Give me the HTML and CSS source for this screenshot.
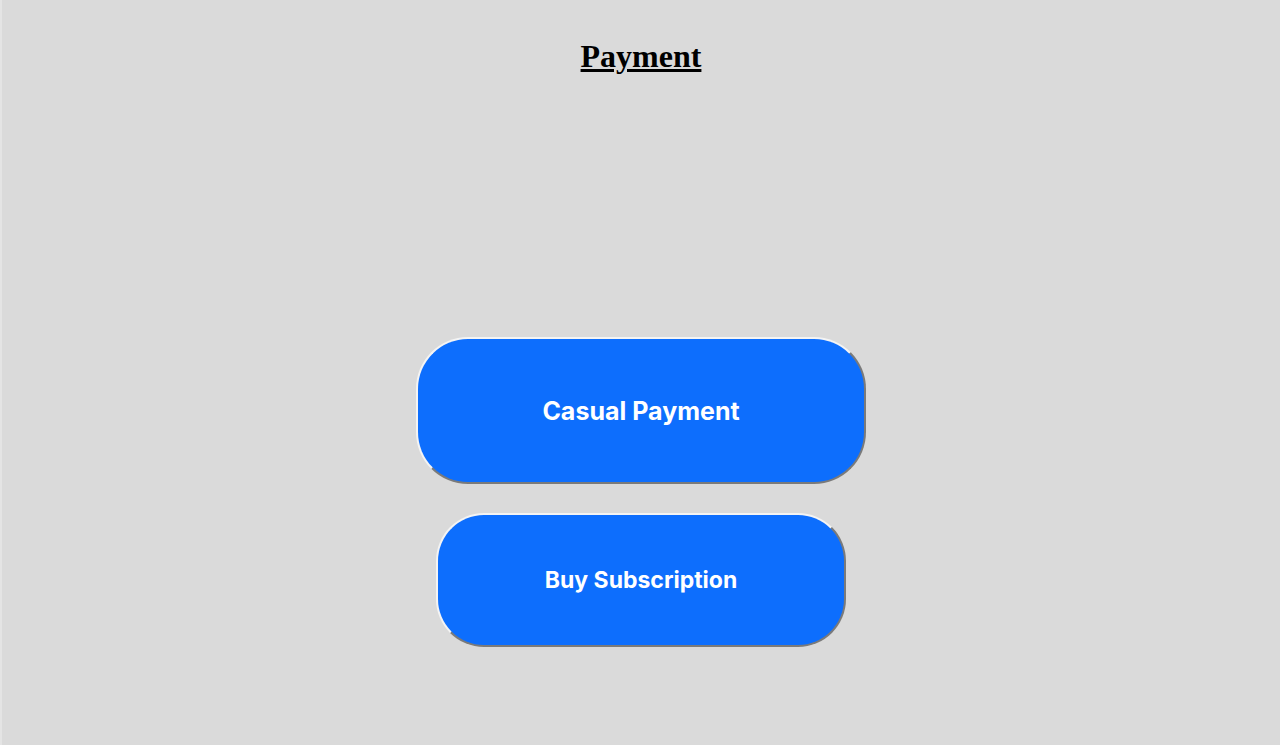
FILE: index.html
```html
<!DOCTYPE html>
<html>
<head>
<meta charset="utf-8">
<link rel="stylesheet" href="styles.css">
</head>
<body>
<div class="page">
  <h1 class="title">Payment</h1>
  <div class="actions">
    <button class="pay-btn casual">Casual Payment</button>
    <button class="pay-btn sub">Buy Subscription</button>
  </div>
</div>
</body>
</html>
```
FILE: styles.css
```css
html, body {
  margin: 0;
  padding: 0;
  height: 100%;
  background: #dadada;
}
.page {
  height: 745px;
  box-sizing: border-box;
  border-left: 2px solid #e4e4e4;
  display: flex;
  flex-direction: column;
  align-items: center;
}
.title {
  margin: 0;
  padding-top: 38px;
  font-family: "Liberation Serif", serif;
  font-size: 32px;
  font-weight: bold;
  text-decoration: underline;
  color: #000;
  line-height: 37px;
}
.actions {
  margin-top: 262px;
  display: flex;
  flex-direction: column;
  align-items: center;
  gap: 29px;
}
.pay-btn {
  box-sizing: border-box;
  background: #0d6efd;
  color: #fff;
  font-family: Inter, "Liberation Sans", sans-serif;
  font-weight: 700;
  border: 2px solid #f4f4f4;
  border-right-color: #7a7a7a;
  border-bottom-color: #7a7a7a;
  border-radius: 52px;
  cursor: pointer;
  padding: 0;
}
.casual {
  width: 450px;
  height: 147px;
  font-size: 25px;
}
.sub {
  width: 410px;
  height: 134px;
  font-size: 23px;
  border-radius: 48px;
}
```
